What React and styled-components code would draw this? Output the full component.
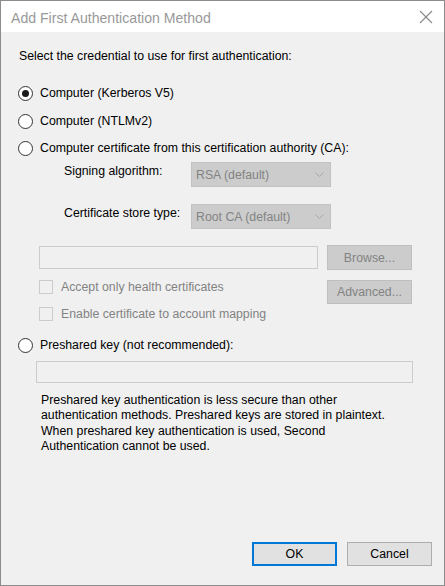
import styled, { createGlobalStyle } from "styled-components";

const GlobalStyle = createGlobalStyle`
  html, body {
    margin: 0;
    padding: 0;
    background: #ffffff;
  }
  * {
    box-sizing: border-box;
  }
`;

const Window = styled.div`
  width: 445px;
  height: 586px;
  display: flex;
  flex-direction: column;
  border: 1px solid #8c8c8c;
  background: #f0f0f0;
  font-family: "Liberation Sans", Arial, sans-serif;
  font-size: 12.3px;
  color: #000;
`;

const TitleBar = styled.div`
  height: 31px;
  flex: none;
  display: flex;
  align-items: center;
  justify-content: space-between;
  padding: 2px 10px 0 10px;
  background: #ffffff;
`;

const Title = styled.span`
  font-size: 14.1px;
  color: #999999;
`;

const Close = styled.svg`
  width: 14px;
  height: 14px;
  margin-top: -1px;
  margin-right: 1px;
`;

const Body = styled.div`
  flex: 1;
  display: flex;
  flex-direction: column;
  padding: 0 12px 0 17px;
`;

const Intro = styled.div`
  margin: 17px 0 0 1px;
  line-height: 15px;
`;

const RadioRow = styled.label`
  display: flex;
  align-items: center;
  height: 20px;
  margin-top: ${(p) => p.$gap}px;
  line-height: 15px;
`;

const RadioDot = styled.span`
  width: 15px;
  height: 15px;
  flex: none;
  margin-right: 7px;
  border: 1px solid #333;
  border-radius: 50%;
  background: #fff;
  display: flex;
  align-items: center;
  justify-content: center;

  &::after {
    content: "";
    display: ${(p) => (p.$checked ? "block" : "none")};
    width: 7px;
    height: 7px;
    border-radius: 50%;
    background: #1a1a1a;
  }
`;

const Nested = styled.div`
  margin-left: 46px;
  display: flex;
  flex-direction: column;
`;

const ComboRow = styled.div`
  display: flex;
  align-items: flex-start;
  margin-top: ${(p) => p.$gap}px;
`;

const ComboLabel = styled.span`
  width: 127px;
  padding-top: 2px;
  line-height: 15px;
`;

const Combo = styled.div`
  width: 140px;
  height: 25px;
  display: flex;
  align-items: center;
  justify-content: space-between;
  padding: 0 6px 0 4px;
  background: #cccccc;
  border: 1px solid #c2c2c2;
  color: #838383;
`;

const Chevron = styled.svg`
  width: 9px;
  height: 6px;
`;

const WideRow = styled.div`
  width: 373px;
  margin: ${(p) => p.$gap}px 0 0 21px;
  display: flex;
  justify-content: space-between;
  align-items: ${(p) => p.$align || "center"};
`;

const TextBox = styled.div`
  width: ${(p) => p.$width}px;
  height: ${(p) => p.$height || 23}px;
  border: 1px solid #cccccc;
  background: #f0f0f0;
  margin-left: ${(p) => p.$indent || 0}px;
  margin-top: ${(p) => p.$gap || 0}px;
`;

const Button = styled.div`
  width: 85px;
  height: ${(p) => p.$height || 24}px;
  display: flex;
  align-items: center;
  justify-content: center;
  background: ${(p) => (p.$disabled ? "#cccccc" : "#e1e1e1")};
  border: ${(p) =>
    p.$primary
      ? "2px solid #0078d7"
      : p.$disabled
      ? "1px solid #bfbfbf"
      : "1px solid #adadad"};
  color: ${(p) => (p.$disabled ? "#838383" : "#000")};
`;

const CheckList = styled.div`
  display: flex;
  flex-direction: column;
  gap: 14px;
`;

const CheckRow = styled.label`
  display: flex;
  align-items: center;
  height: 13px;
  color: #838383;
`;

const CheckBox = styled.span`
  width: 14px;
  height: 14px;
  flex: none;
  margin-right: 8px;
  border: 1px solid #cccccc;
  background: #f0f0f0;
`;

const Note = styled.p`
  margin: 10px 0 0 23px;
  line-height: 15.4px;
`;

const Footer = styled.div`
  margin-top: auto;
  display: flex;
  justify-content: flex-end;
  gap: 10px;
  padding-bottom: 19px;
`;

const ChevronIcon = () => (
  <Chevron viewBox="0 0 9 6">
    <path d="M0.5 0.5 L4.5 4.5 L8.5 0.5" fill="none" stroke="#a6a6a6" strokeWidth="1" />
  </Chevron>
);

const Radio = ({ checked, gap, children }) => (
  <RadioRow $gap={gap}>
    <RadioDot $checked={checked} />
    {children}
  </RadioRow>
);

const Check = ({ children }) => (
  <CheckRow>
    <CheckBox />
    {children}
  </CheckRow>
);

export default function App() {
  return (
    <>
      <GlobalStyle />
      <Window>
        <TitleBar>
          <Title>Add First Authentication Method</Title>
          <Close viewBox="0 0 14 14">
            <path d="M1 1 L13 13 M13 1 L1 13" stroke="#8a8a8a" strokeWidth="1.1" fill="none" />
          </Close>
        </TitleBar>
        <Body>
          <Intro>Select the credential to use for first authentication:</Intro>
          <Radio checked gap={19}>Computer (Kerberos V5)</Radio>
          <Radio gap={8}>Computer (NTLMv2)</Radio>
          <Radio gap={7}>Computer certificate from this certification authority (CA):</Radio>

          <Nested>
            <ComboRow $gap={4}>
              <ComboLabel>Signing algorithm:</ComboLabel>
              <Combo>
                RSA (default)
                <ChevronIcon />
              </Combo>
            </ComboRow>
            <ComboRow $gap={17}>
              <ComboLabel>Certificate store type:</ComboLabel>
              <Combo>
                Root CA (default)
                <ChevronIcon />
              </Combo>
            </ComboRow>
          </Nested>

          <WideRow $gap={16}>
            <TextBox $width={279} />
            <Button $disabled $height={25}>Browse...</Button>
          </WideRow>

          <WideRow $gap={10} $align="flex-start">
            <CheckList>
              <Check>Accept only health certificates</Check>
              <Check>Enable certificate to account mapping</Check>
            </CheckList>
            <Button $disabled>Advanced...</Button>
          </WideRow>

          <Radio gap={15}>Preshared key (not recommended):</Radio>
          <TextBox $width={377} $height={22} $indent={18} $gap={6} />

          <Note>
            Preshared key authentication is less secure than other
            <br />
            authentication methods. Preshared keys are stored in plaintext.
            <br />
            When preshared key authentication is used, Second
            <br />
            Authentication cannot be used.
          </Note>

          <Footer>
            <Button $primary>OK</Button>
            <Button>Cancel</Button>
          </Footer>
        </Body>
      </Window>
    </>
  );
}
